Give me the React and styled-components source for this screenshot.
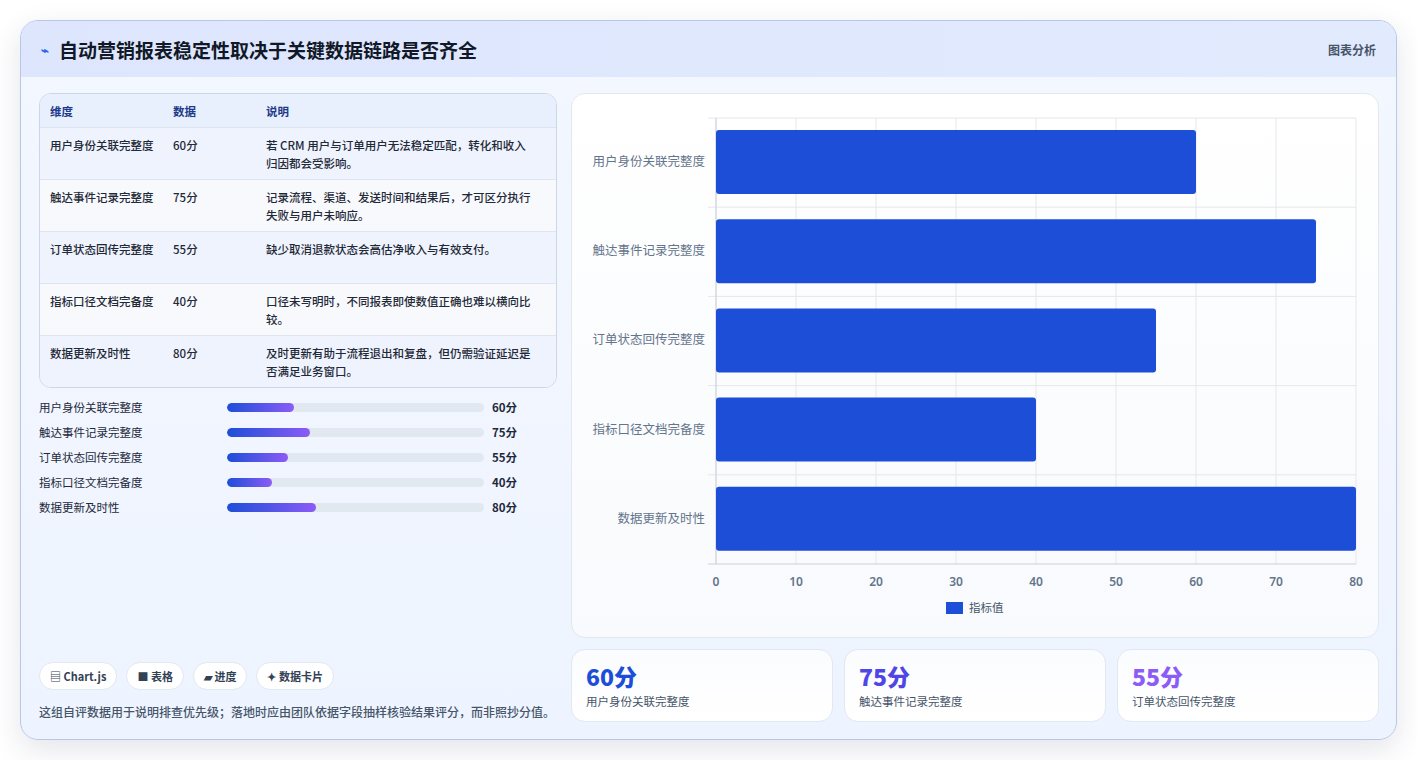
import React from "react";
import styled, { createGlobalStyle } from "styled-components";

const G = createGlobalStyle`
  body{margin:0;background:#fff;font-family:"Noto Sans CJK SC","Noto Sans",sans-serif;color:#1e293b;}
`;
const Page = styled.div`padding:20px 20px 20px 20px;width:1417px;box-sizing:border-box;`;
const Card = styled.div`
  width:1377px;height:720px;box-sizing:border-box;border:1px solid #b9c6ea;border-radius:18px;
  background:linear-gradient(180deg,#f3f7ff,#eef4ff);overflow:hidden;
  box-shadow:0 10px 30px rgba(30,41,80,0.12);display:flex;flex-direction:column;`;
const Header = styled.div`
  height:56px;flex:none;background:linear-gradient(90deg,#dde6fd,#e2eafe);display:flex;align-items:center;
  padding:0 20px 0 20px;justify-content:space-between;`;
const Title = styled.h1`margin:0;font-size:19px;font-weight:700;color:#111827;display:flex;align-items:center;gap:10px;`;
const Icon = styled.span`color:#2563eb;font-size:13px;`;
const HeaderLink = styled.span`font-size:12px;color:#475569;font-weight:600;`;
const Body = styled.div`flex:1;display:grid;grid-template-columns:518px 808px;gap:14px;padding:16px 18px 18px 18px;`;
const Left = styled.div`display:flex;flex-direction:column;`;
const Table = styled.div`border:1px solid #cdd6e6;border-radius:12px;overflow:hidden;background:#f8faff;`;
const Row = styled.div`
  display:grid;grid-template-columns:123px 93px 1fr;padding:0 10px;font-size:11.5px;line-height:18px;
  border-top:${p=>p.$head?"none":"1px solid #dfe5ef"};
  background:${p=>p.$head?"#e9f0fd":p.$alt?"#f7f9fd":"#eef3fd"};
  color:${p=>p.$head?"#1e3a8a":"#1f2937"};font-weight:${p=>p.$head?600:500};
  height:${p=>p.$head?"33px":"52px"};align-items:${p=>p.$head?"center":"start"};
  padding-top:${p=>p.$head?"0":"8px"};box-sizing:border-box;`;
const Cell = styled.div`padding-right:10px;`;
const Bars = styled.div`display:flex;flex-direction:column;gap:7px;margin-top:10px;`;
const BarRow = styled.div`display:grid;grid-template-columns:188px 257px 1fr;gap:0;align-items:center;font-size:11.5px;height:18px;`;
const Track = styled.div`height:9px;border-radius:5px;background:#e2e8f0;overflow:hidden;`;
const Fill = styled.div`height:100%;border-radius:5px;background:linear-gradient(90deg,#1d4ed8,#8b5cf6);`;
const Val = styled.span`font-weight:700;padding-left:8px;`;
const Chips = styled.div`display:flex;gap:9px;margin-top:auto;`;
const Chip = styled.span`background:#fff;border:1px solid #e2e8f0;border-radius:14px;height:28px;padding:0 10px;display:flex;align-items:center;gap:4px;font-size:11px;font-weight:600;color:#334155;box-sizing:border-box;`;
const Note = styled.p`margin:12px 0 0;font-size:12px;line-height:20px;color:#475569;font-weight:500;`;
const Right = styled.div`display:flex;flex-direction:column;gap:11px;`;
const ChartCard = styled.div`height:545px;background:linear-gradient(180deg,#fff,#f8fafd);border:1px solid #e2e8f0;border-radius:14px;box-sizing:border-box;overflow:hidden;`;
const Stats = styled.div`display:grid;grid-template-columns:repeat(3,1fr);gap:11px;`;
const Stat = styled.div`height:73px;background:linear-gradient(180deg,#fbfcff,#fff);border:1px solid #e2e8f0;border-radius:14px;padding:12px 14px;box-sizing:border-box;`;
const StatNum = styled.div`font-size:23px;font-weight:800;line-height:28px;color:${p=>p.$c};`;
const StatLab = styled.div`font-size:11.5px;color:#475569;margin-top:3px;`;

const data=[["用户身份关联完整度",60,"若 CRM 用户与订单用户无法稳定匹配，转化和收入归因都会受影响。"],["触达事件记录完整度",75,"记录流程、渠道、发送时间和结果后，才可区分执行失败与用户未响应。"],["订单状态回传完整度",55,"缺少取消退款状态会高估净收入与有效支付。"],["指标口径文档完备度",40,"口径未写明时，不同报表即使数值正确也难以横向比较。"],["数据更新及时性",80,"及时更新有助于流程退出和复盘，但仍需验证延迟是否满足业务窗口。"]];

function Chart(){
  const x0=144,x1=784,y0=24,step=89.2;
  return <svg width="806" height="543" viewBox="0 0 806 543" style={{display:"block"}}>
    {Array.from({length:9},(_,i)=><line key={i} x1={x0+i*80} x2={x0+i*80} y1={y0} y2={470} stroke="#e5e7eb"/>)}
    {Array.from({length:6},(_,i)=><line key={i} x1={x0-8} x2={x1} y1={y0+i*step} y2={y0+i*step} stroke={i===5?"#cbd0da":"#e5e7eb"}/>)}
    <line x1={x0} x2={x0} y1={y0} y2={470} stroke="#cbd0da"/>
    {data.map((d,i)=><g key={i}>
      <rect x={x0} y={y0+i*step+12} width={d[1]*8} height={64} rx="3" fill="#1d4ed8"/>
      <text x={133} y={y0+i*step+48} textAnchor="end" fontSize="12.5" fill="#64748b" fontFamily="Noto Sans CJK SC">{d[0]}</text>
    </g>)}
    {Array.from({length:9},(_,i)=><text key={i} x={x0+i*80} y={492} textAnchor="middle" fontSize="12" fill="#64748b" fontWeight="600" fontFamily="Noto Sans">{i*10}</text>)}
    <rect x={374} y={508} width={17} height={12} fill="#1d4ed8"/>
    <text x={397} y={518} fontSize="11.5" fill="#475569" fontFamily="Noto Sans CJK SC">指标值</text>
  </svg>;
}

export default function App(){
  return <Page><G/><Card>
    <Header><Title><Icon>⌁</Icon>自动营销报表稳定性取决于关键数据链路是否齐全</Title><HeaderLink>图表分析</HeaderLink></Header>
    <Body>
      <Left>
        <Table>
          <Row $head><Cell>维度</Cell><Cell>数据</Cell><Cell>说明</Cell></Row>
          {data.map((d,i)=><Row key={i} $alt={i%2===1}><Cell>{d[0]}</Cell><Cell>{d[1]}分</Cell><Cell>{d[2]}</Cell></Row>)}
        </Table>
        <Bars>{data.map((d,i)=><BarRow key={i}><span>{d[0]}</span><Track><Fill style={{width:`${d[1]*0.433}%`}}/></Track><Val>{d[1]}分</Val></BarRow>)}</Bars>
        <Chips><Chip>▤ Chart.js</Chip><Chip>■ 表格</Chip><Chip>▰ 进度</Chip><Chip>✦ 数据卡片</Chip></Chips>
        <Note>这组自评数据用于说明排查优先级；落地时应由团队依据字段抽样核验结果评分，而非照抄分值。</Note>
      </Left>
      <Right>
        <ChartCard><Chart/></ChartCard>
        <Stats>
          <Stat><StatNum $c="#1d4ed8">60分</StatNum><StatLab>用户身份关联完整度</StatLab></Stat>
          <Stat><StatNum $c="#4f46e5">75分</StatNum><StatLab>触达事件记录完整度</StatLab></Stat>
          <Stat><StatNum $c="#8b5cf6">55分</StatNum><StatLab>订单状态回传完整度</StatLab></Stat>
        </Stats>
      </Right>
    </Body>
  </Card></Page>;
}
